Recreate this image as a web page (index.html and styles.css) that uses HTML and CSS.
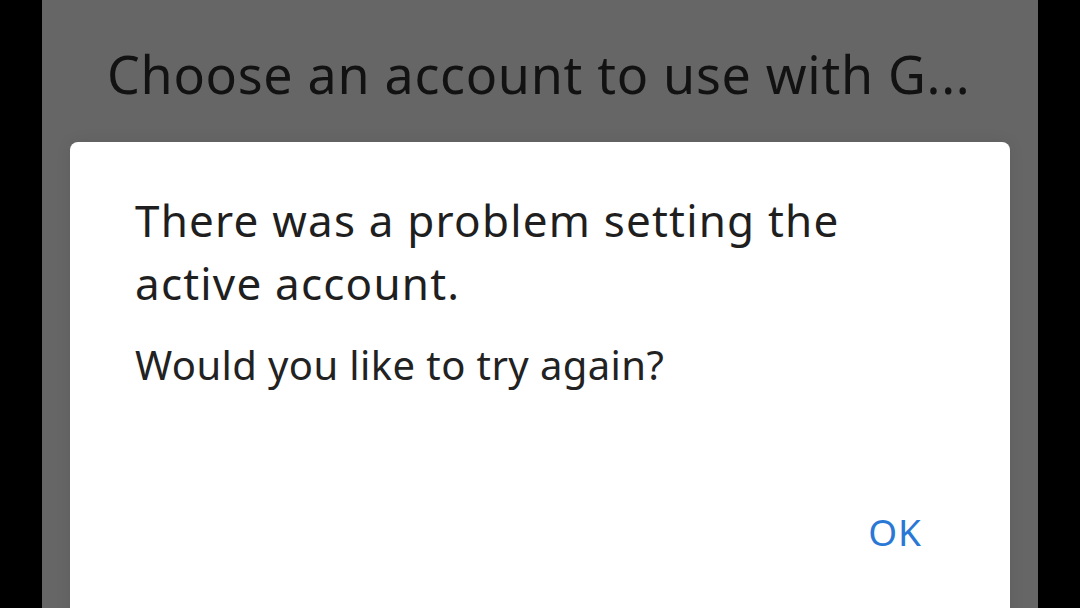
FILE: index.html
```html
<!DOCTYPE html>
<html lang="en">
<head>
    <meta charset="UTF-8">
    <meta name="viewport" content="width=device-width, initial-scale=1.0">
    <title>Choose an account</title>
    <link rel="stylesheet" href="styles.css">
</head>
<body>
    <div class="screen">
        <h1 class="title">Choose an account to use with G...</h1>
        <div class="dialog">
            <h2 class="dialog-title">There was a problem setting the active account.</h2>
            <p class="dialog-text">Would you like to try again?</p>
            <div class="actions">
                <button class="ok-button">OK</button>
            </div>
        </div>
    </div>
</body>
</html>
```

FILE: styles.css
```css
body {
    margin: 0;
    background: #000;
    height: 608px;
    overflow: hidden;
    font-family: 'Noto Sans', 'Open Sans', sans-serif;
}
.screen {
    margin-left: 42px;
    width: 996px;
    height: 608px;
    background: #666;
    overflow: hidden;
}
.title {
    margin: 0;
    padding: 41px 0 0 65px;
    height: 100px;
    box-sizing: border-box;
    font-size: 52px;
    font-weight: 400;
    letter-spacing: 0.7px;
    line-height: 66px;
    color: #121212;
    white-space: nowrap;
}
.dialog {
    margin: 42px 28px 0;
    height: 500px;
    background: #fff;
    border-radius: 8px;
    padding: 47px 65px 0;
    box-shadow: 0 0 16px rgba(0, 0, 0, 0.08);
}
.dialog-title {
    margin: 0;
    font-size: 44px;
    font-weight: 400;
    letter-spacing: 1.2px;
    line-height: 63px;
    color: #1f1f1f;
    width: 760px;
}
.dialog-text {
    margin: 22px 0 0;
    font-size: 40px;
    letter-spacing: 0.4px;
    line-height: 56px;
    color: #222;
}
.actions {
    display: flex;
    justify-content: flex-end;
    margin-top: 113px;
    padding-right: 23px;
}
.ok-button {
    background: none;
    border: none;
    padding: 0;
    font-family: inherit;
    font-size: 37px;
    letter-spacing: 1px;
    color: #2a78d6;
}
```
